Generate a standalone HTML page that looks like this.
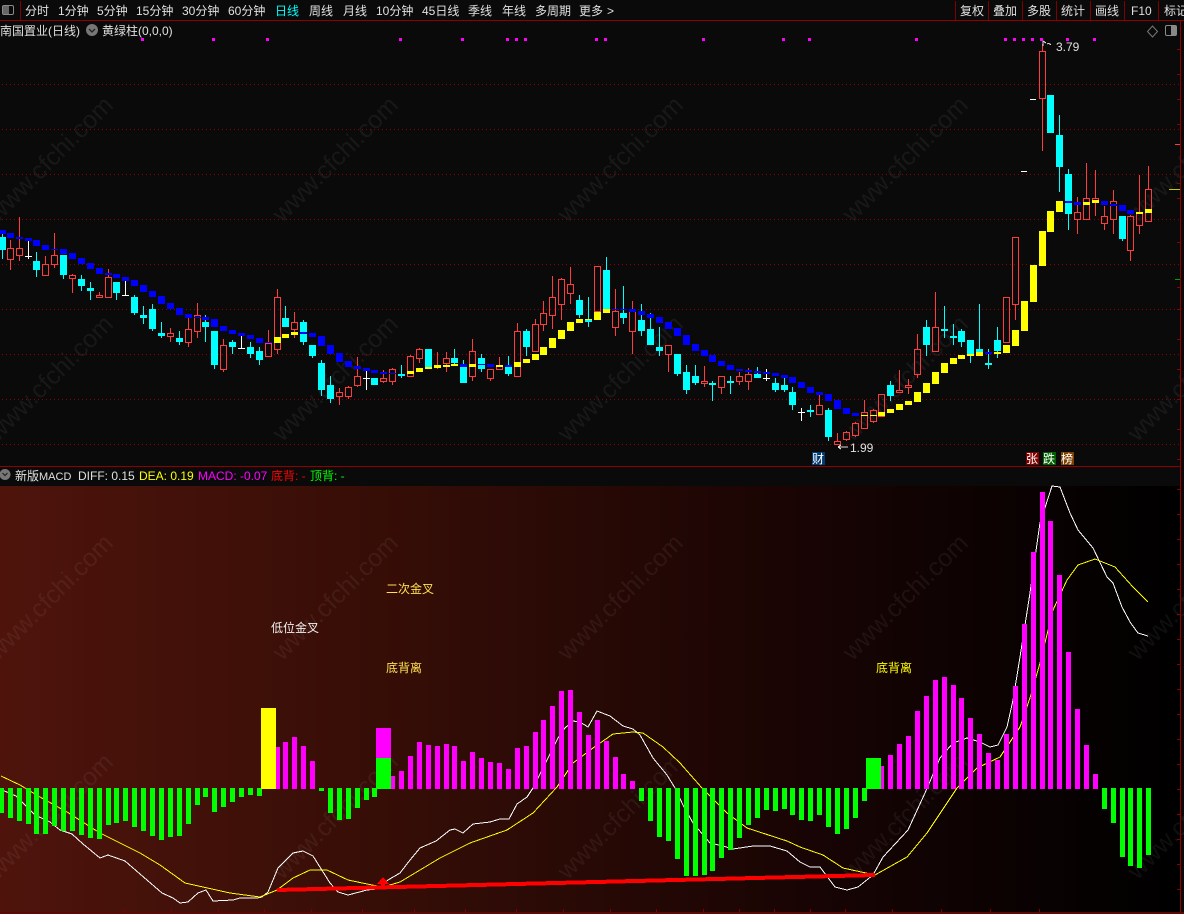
<!DOCTYPE html>
<html>
<head>
<meta charset="utf-8">
<style>
html,body{margin:0;padding:0;background:#0a0a0a;width:1184px;height:914px;overflow:hidden}
svg{display:block;position:absolute;left:0;top:0}
text{font-family:"Liberation Sans","WenQuanYi Zen Hei","Noto Sans CJK SC",sans-serif;font-size:12px}
.t{fill:#e0e0e0}
.w{font-size:25px;fill:#fff;fill-opacity:.06}
</style>
</head>
<body>
<svg width="1184" height="914" viewBox="0 0 1184 914" shape-rendering="crispEdges">
<defs><linearGradient id="g" x1="0" x2="1" y1="0" y2="0"><stop offset="0" stop-color="#4e140c"/><stop offset=".35" stop-color="#340d06"/><stop offset=".7" stop-color="#170404"/><stop offset="1" stop-color="#000"/></linearGradient></defs>
<rect width="1184" height="914" fill="#0a0a0a"/>
<rect x="0" y="486" width="1180" height="426" fill="url(#g)"/>

<!-- watermarks -->
<g class="w" text-anchor="middle">
<text class="w" transform="translate(56 165) rotate(-45)">www.cfchi.com</text>
<text class="w" transform="translate(341 165) rotate(-45)">www.cfchi.com</text>
<text class="w" transform="translate(626 165) rotate(-45)">www.cfchi.com</text>
<text class="w" transform="translate(911 165) rotate(-45)">www.cfchi.com</text>
<text class="w" transform="translate(1196 165) rotate(-45)">www.cfchi.com</text>
<text class="w" transform="translate(56 384) rotate(-45)">www.cfchi.com</text>
<text class="w" transform="translate(341 384) rotate(-45)">www.cfchi.com</text>
<text class="w" transform="translate(626 384) rotate(-45)">www.cfchi.com</text>
<text class="w" transform="translate(911 384) rotate(-45)">www.cfchi.com</text>
<text class="w" transform="translate(1196 384) rotate(-45)">www.cfchi.com</text>
<text class="w" transform="translate(56 603) rotate(-45)">www.cfchi.com</text>
<text class="w" transform="translate(341 603) rotate(-45)">www.cfchi.com</text>
<text class="w" transform="translate(626 603) rotate(-45)">www.cfchi.com</text>
<text class="w" transform="translate(911 603) rotate(-45)">www.cfchi.com</text>
<text class="w" transform="translate(1196 603) rotate(-45)">www.cfchi.com</text>
<text class="w" transform="translate(56 822) rotate(-45)">www.cfchi.com</text>
<text class="w" transform="translate(341 822) rotate(-45)">www.cfchi.com</text>
<text class="w" transform="translate(626 822) rotate(-45)">www.cfchi.com</text>
<text class="w" transform="translate(911 822) rotate(-45)">www.cfchi.com</text>
<text class="w" transform="translate(1196 822) rotate(-45)">www.cfchi.com</text>
</g>

<!-- grid -->
<path d="M2 84.5H1180M2 129.5H1180M2 174.5H1180M2 219.5H1180M2 264.5H1180M2 309.5H1180M2 354.5H1180M2 399.5H1180M2 444.5H1180" stroke="#8f0000" stroke-width="1" stroke-dasharray="1 3" fill="none"/>

<!-- frame lines -->
<rect x="0" y="20" width="1184" height="1" fill="#900000"/>
<rect x="0" y="466" width="1180" height="1" fill="#900000"/>
<rect x="1180" y="21" width="1" height="891" fill="#900000"/>
<rect x="0" y="912" width="1184" height="2" fill="#5a0808"/>
<path d="M20.500 1V20M955.500 1V20M988.500 1V20M1022.500 1V20M1056.500 1V20M1090.500 1V20M1124.500 1V20M1158.500 1V20" stroke="#800000"/>
<path d="M1177 49.5h3M1177 74.5h3M1177 99.5h3M1177 124.5h3M1177 183.5h3M1177 198.5h3M1177 242.5h3M1177 287.5h3M1177 309.5h3M1177 339.5h3M1177 369.5h3M1177 399.5h3M1177 429.5h3M1177 459.5h3M1177 489.5h3M1177 514.5h3M1177 539.5h3M1177 564.5h3M1177 589.5h3M1177 614.5h3M1177 639.5h3M1177 664.5h3M1177 689.5h3M1177 714.5h3M1177 739.5h3M1177 764.5h3M1177 789.5h3M1177 814.5h3M1177 839.5h3M1177 864.5h3M1177 889.5h3" stroke="#900000" fill="none"/>
<path d="M1175 144.5h5" stroke="#ff3c3c"/><path d="M1169 189.5h11" stroke="#c8c800"/><path d="M1175 279.5h5" stroke="#00a000"/>
<path d="M124.5 909v3M171.5 909v3M218.5 909v3M264.5 909v3M311.5 909v3M362.5 909v3M414.5 909v3M465.5 909v3M516.5 909v3M563.5 909v3M610.5 909v3M656.5 909v3M703.5 909v3M739.5 909v3M774.5 909v3M810.5 909v3M845.5 909v3M892.5 909v3M941.5 909v3M990.5 909v3M1039.5 909v3" stroke="#800000"/>

<!-- top-left & right icons -->
<rect x="2.5" y="5.5" width="11" height="9" rx="1.5" fill="none" stroke="#8a8a8a" shape-rendering="auto"/><rect x="3" y="6" width="6" height="8" fill="#666"/>
<path d="M1152.500 26l5 5.500-5 5.500-5-5.500z" fill="none" stroke="#777" shape-rendering="auto"/>
<rect x="1165.5" y="25.5" width="11" height="10" rx="1.5" fill="none" stroke="#8a8a8a" shape-rendering="auto"/><rect x="1171" y="26" width="5" height="9" fill="#888"/>

<!-- magenta dots -->
<path fill="#f0f" d="M141 38h3v3h-3zM212 38h3v3h-3zM266 38h3v3h-3zM399 38h3v3h-3zM461 38h3v3h-3zM506 38h3v3h-3zM515 38h3v3h-3zM524 38h3v3h-3zM595 38h3v3h-3zM604 38h3v3h-3zM702 38h3v3h-3zM782 38h3v3h-3zM808 38h3v3h-3zM915 38h3v3h-3zM1004 38h3v3h-3zM1013 38h3v3h-3zM1022 38h3v3h-3zM1031 38h3v3h-3zM1040 38h3v3h-3zM1066 38h3v3h-3zM1093 38h3v3h-3z"/>

<!-- toolbar text -->
<g class="t">
<text class="t" x="25" y="15">分时</text>
<text class="t" x="58" y="15">1分钟</text>
<text class="t" x="97" y="15">5分钟</text>
<text class="t" x="136" y="15">15分钟</text>
<text class="t" x="182" y="15">30分钟</text>
<text class="t" x="228" y="15">60分钟</text>
<text x="275" y="15" fill="#00ffff">日线</text>
<text class="t" x="309" y="15">周线</text>
<text class="t" x="343" y="15">月线</text>
<text class="t" x="376" y="15">10分钟</text>
<text class="t" x="422" y="15">45日线</text>
<text class="t" x="468" y="15">季线</text>
<text class="t" x="502" y="15">年线</text>
<text class="t" x="535" y="15">多周期</text>
<text class="t" x="579" y="15">更多</text>
<text class="t" x="607" y="15">&gt;</text>
<text class="t" x="960" y="15">复权</text>
<text class="t" x="993" y="15">叠加</text>
<text class="t" x="1027" y="15">多股</text>
<text class="t" x="1061" y="15">统计</text>
<text class="t" x="1095" y="15">画线</text>
<text class="t" x="1131" y="15">F10</text>
<text class="t" x="1164" y="15">标记</text>
<text class="t" x="0" y="35">南国置业(日线)</text>
<text class="t" x="102" y="35">黄绿柱(0,0,0)</text>
</g>
<g shape-rendering="auto"><circle cx="92" cy="30" r="6" fill="#777"/><path d="M89 29l3 3 3-3" fill="none" stroke="#222" stroke-width="1.3"/></g>

<!-- red candles -->
<path fill="none" stroke="#ff3c3c" stroke-width="1" d="
M10.5 240V248M10.5 260V270M7.5 248.5h6v11h-6z
M19.5 217V248M19.5 256V261M16.5 248.5h6v7h-6z
M45.5 256V264M42.5 264.5h6v11h-6z
M54.5 233V255M54.5 265V268M51.5 255.5h6v9h-6z
M72.5 274V275M72.5 279V293M69.5 275.5h6v3h-6z
M99.5 292V295M96.5 295.5h6v2h-6z
M108.5 269V277M105.5 277.5h6v20h-6z
M170.5 328V333M170.5 337V342M167.5 333.5h6v3h-6z
M188.5 318V329M188.5 343V347M185.5 329.5h6v13h-6z
M197.5 303V315M197.5 332V338M194.5 315.5h6v16h-6z
M223.5 339V345M223.5 370V372M220.5 345.5h6v24h-6z
M268.5 330V343M265.5 343.5h6v13h-6z
M277.5 289V297M277.5 350V354M274.5 297.5h6v52h-6z
M294.5 312V322M294.5 330V338M291.5 322.5h6v7h-6z
M339.5 388V392M339.5 397V405M336.5 392.5h6v4h-6z
M348.5 386V387M348.5 397V399M345.5 387.5h6v9h-6z
M357.5 357V376M357.5 386V387M354.5 376.5h6v9h-6z
M383.5 370V378M383.5 382V383M380.5 378.5h6v3h-6z
M392.5 368V369M392.5 382V385M389.5 369.5h6v12h-6z
M410.5 355V356M407.5 356.5h6v20h-6z
M419.5 348V349M419.5 359V363M416.5 349.5h6v9h-6z
M437.5 352V365M437.5 368V369M434.5 365.5h6v2h-6z
M446.5 352V358M446.5 364V372M443.5 358.5h6v5h-6z
M472.5 339V351M472.5 377V381M469.5 351.5h6v25h-6z
M490.5 379V381M487.5 369.5h6v9h-6z
M499.5 357V365M496.5 365.5h6v4h-6z
M517.5 323V331M514.5 331.5h6v45h-6z
M535.5 319V324M532.5 324.5h6v27h-6z
M543.5 301V313M543.5 325V331M540.5 313.5h6v11h-6z
M552.5 276V297M552.5 316V329M549.5 297.5h6v18h-6z
M561.5 278V279M561.5 305V320M558.5 279.5h6v25h-6z
M570.5 267V284M570.5 294V304M567.5 284.5h6v9h-6z
M594.5 266.5h6v45h-6z
M615.5 289V311M615.5 328V336M612.5 311.5h6v16h-6z
M632.5 301V309M632.5 332V354M629.5 309.5h6v22h-6z
M668.5 355V372M665.5 345.5h6v9h-6z
M704.5 366V381M704.5 384V387M701.5 381.5h6v2h-6z
M721.5 388V394M718.5 376.5h6v11h-6z
M739.5 372V376M739.5 382V385M736.5 376.5h6v5h-6z
M748.5 368V374M748.5 382V390M745.5 374.5h6v7h-6z
M819.5 395V405M816.5 405.5h6v9h-6z
M837.5 433V441M834.5 441.5h6v3h-6z
M846.5 431V432M846.5 440V441M843.5 432.5h6v7h-6z
M855.5 422V423M855.5 436V437M852.5 423.5h6v12h-6z
M864.5 400V412M861.5 412.5h6v16h-6z
M873.5 409V410M873.5 422V423M870.5 410.5h6v11h-6z
M878.5 394.5h6v22h-6z
M899.5 370V390M896.5 390.5h6v2h-6z
M908.5 379V385M908.5 388V394M905.5 385.5h6v2h-6z
M917.5 334V349M917.5 375V378M914.5 349.5h6v25h-6z
M935.5 292V327M932.5 327.5h6v24h-6z
M1003.5 297.5h6v45h-6z
M1015.5 305V320M1012.5 237.5h6v67h-6z
M1042.5 44V51M1042.5 99V151M1039.5 51.5h6v47h-6z
M1077.5 197V212M1077.5 220V234M1074.5 212.5h6v7h-6z
M1086.5 163V198M1083.5 198.5h6v21h-6z
M1095.5 170V198M1095.5 203V216M1092.5 198.5h6v4h-6z
M1104.5 206V216M1104.5 224V230M1101.5 216.5h6v7h-6z
M1113.5 190V201M1113.5 220V234M1110.5 201.5h6v18h-6z
M1130.5 215V216M1130.5 251V261M1127.5 216.5h6v34h-6z
M1139.5 175V213M1139.5 226V234M1136.5 213.5h6v12h-6z
M1148.5 166V189M1145.5 189.5h6v32h-6z"/>

<!-- cyan wicks -->
<path fill="none" stroke="#00ffff" stroke-width="1" d="M2.5 234V259M36.5 252V277M63.5 255V279M81.5 275V291M90.5 282V300M116.5 282V300M134.5 295V315M143.5 306V324M152.5 304V331M161.5 322V338M179.5 331V345M205.5 315V342M214.5 331V369M232.5 340V354M250.5 342V358M259.5 347V365M285.5 306V327M303.5 320V345M312.5 345V358M321.5 360V396M330.5 376V403M374.5 378V385M401.5 365V378M428.5 349V368M454.5 349V365M463.5 360V383M481.5 354V372M508.5 356V376M526.5 329V356M579.5 295V318M588.5 297V327M606.5 257V309M623.5 286V324M641.5 304V336M650.5 313V345M659.5 327V356M677.5 354V376M686.5 365V394M695.5 365V385M712.5 381V401M730.5 376V394M757.5 367V378M775.5 378V392M784.5 378V392M792.5 387V410M810.5 405V417M828.5 408V441M890.5 381V401M926.5 320V356M944.5 306V338M953.5 324V345M961.5 329V347M970.5 340V363M979.5 304V354M988.5 349V369M997.5 327V358M1050.5 95V133M1059.5 115V192M1068.5 169V230M1122.5 216V241"/>
<!-- cyan bodies -->
<path fill="#00ffff" d="M-1 237h7v13h-7zM33 261h7v9h-7zM60 255h7v20h-7zM78 279h7v7h-7zM87 288h7v3h-7zM113 282h7v11h-7zM131 297h7v16h-7zM140 315h7v3h-7zM149 309h7v20h-7zM158 333h7v3h-7zM176 338h7v4h-7zM202 322h7v5h-7zM211 331h7v34h-7zM229 342h7v5h-7zM247 347h7v7h-7zM256 351h7v9h-7zM282 318h7v9h-7zM300 322h7v20h-7zM309 345h7v11h-7zM318 363h7v27h-7zM327 385h7v14h-7zM371 378h7v7h-7zM398 374h7v2h-7zM425 349h7v19h-7zM451 358h7v5h-7zM460 365h7v18h-7zM478 358h7v11h-7zM505 367h7v7h-7zM523 331h7v16h-7zM576 300h7v15h-7zM585 319h7v3h-7zM603 270h7v39h-7zM620 313h7v5h-7zM638 320h7v11h-7zM647 329h7v16h-7zM656 347h7v4h-7zM674 354h7v20h-7zM683 372h7v18h-7zM692 376h7v7h-7zM709 383h7v2h-7zM727 381h7v2h-7zM754 374h7v4h-7zM772 383h7v7h-7zM781 385h7v5h-7zM789 392h7v13h-7zM807 410h7v2h-7zM825 410h7v27h-7zM887 385h7v11h-7zM923 327h7v18h-7zM941 329h7v2h-7zM950 336h7v2h-7zM958 331h7v11h-7zM967 340h7v16h-7zM976 349h7v5h-7zM985 363h7v2h-7zM994 340h7v11h-7zM1047 95h7v38h-7zM1056 135h7v32h-7zM1065 174h7v40h-7zM1119 216h7v23h-7z"/>
<!-- white dojis -->
<path fill="none" stroke="#fff" stroke-width="1" d="M28.5 241V259M25 256.5h7M125.5 281V296M122 295.5h7M241.5 336V349M238 348.5h7M366.5 371V390M363 378.5h7M766.5 369V381M763 378.5h7M801.5 408V421M798 412.5h7M1030 99.5h6M1021 171.5h6"/>

<!-- blue band -->
<path fill="#0000ff" d="M-1 230h7v4h-7zM7 233h7v5h-7zM16 237h7v2h-7zM25 238h7v3h-7zM33 240h7v6h-7zM42 245h7v5h-7zM51 249h7v1h-7zM60 249h7v5h-7zM69 253h7v6h-7zM78 258h7v6h-7zM87 263h7v6h-7zM96 268h7v6h-7zM105 273h7v2h-7zM113 274h7v4h-7zM122 277h7v4h-7zM131 280h7v6h-7zM140 285h7v7h-7zM149 291h7v6h-7zM158 296h7v8h-7zM167 303h7v6h-7zM176 308h7v7h-7zM185 314h7v4h-7zM194 317h7v1h-7zM202 317h7v3h-7zM211 319h7v8h-7zM220 326h7v5h-7zM229 330h7v4h-7zM238 333h7v3h-7zM247 335h7v4h-7zM256 338h7v5h-7zM265 342h7v1h-7zM300 332h7v2h-7zM309 333h7v4h-7zM318 336h7v10h-7zM327 345h7v9h-7zM336 353h7v9h-7zM345 361h7v6h-7zM354 366h7v3h-7zM363 368h7v3h-7zM371 370h7v3h-7zM380 372h7v2h-7zM389 373h7v1h-7zM460 364h7v3h-7zM478 364h7v1h-7zM487 364h7v3h-7zM505 365h7v2h-7zM612 309h7v1h-7zM620 309h7v1h-7zM629 309h7v3h-7zM638 311h7v4h-7zM647 314h7v4h-7zM656 317h7v6h-7zM665 322h7v7h-7zM674 328h7v8h-7zM683 335h7v10h-7zM692 344h7v7h-7zM701 350h7v6h-7zM709 355h7v7h-7zM718 361h7v5h-7zM727 365h7v5h-7zM736 369h7v2h-7zM745 370h7v2h-7zM754 371h7v2h-7zM763 372h7v2h-7zM772 373h7v3h-7zM781 375h7v3h-7zM789 377h7v6h-7zM798 382h7v6h-7zM807 387h7v6h-7zM816 392h7v3h-7zM825 394h7v7h-7zM834 400h7v9h-7zM843 408h7v6h-7zM852 413h7v3h-7zM985 352h7v2h-7zM1065 201h7v2h-7zM1074 202h7v3h-7zM1101 201h7v4h-7zM1110 204h7v2h-7zM1119 205h7v6h-7zM1127 210h7v4h-7z"/>
<!-- yellow band -->
<path fill="#ffff00" d="M274 337h7v6h-7zM282 334h7v4h-7zM291 332h7v3h-7zM407 371h7v3h-7zM416 368h7v4h-7zM425 367h7v2h-7zM434 365h7v3h-7zM443 365h7v2h-7zM451 364h7v2h-7zM469 364h7v3h-7zM496 365h7v2h-7zM514 362h7v5h-7zM523 359h7v4h-7zM532 354h7v6h-7zM540 347h7v8h-7zM549 338h7v10h-7zM558 330h7v9h-7zM567 322h7v9h-7zM576 319h7v4h-7zM585 319h7v1h-7zM594 312h7v8h-7zM603 309h7v4h-7zM861 415h7v1h-7zM870 415h7v1h-7zM878 412h7v4h-7zM887 409h7v4h-7zM896 404h7v6h-7zM905 401h7v4h-7zM914 392h7v10h-7zM923 383h7v10h-7zM932 372h7v12h-7zM941 363h7v10h-7zM950 358h7v6h-7zM958 355h7v4h-7zM967 354h7v2h-7zM976 352h7v4h-7zM994 352h7v2h-7zM1003 345h7v8h-7zM1012 330h7v16h-7zM1021 301h7v30h-7zM1030 265h7v37h-7zM1039 231h7v35h-7zM1047 211h7v21h-7zM1056 201h7v11h-7zM1083 202h7v3h-7zM1092 200h7v3h-7zM1136 212h7v2h-7zM1145 209h7v4h-7z"/>

<!-- price labels & badges -->
<path d="M1043 41v5M1043 41l3 2M1047 44c2-1 3 0 4 1" fill="none" stroke="#ddd"/>
<text class="t" x="1056" y="51">3.79</text>
<path d="M848 447h-10M838 447l3-2M838 447l3 2" fill="none" stroke="#ddd"/>
<text class="t" x="850" y="452">1.99</text>
<rect x="812" y="452" width="13" height="13" fill="#003a70"/><text x="812" y="463" fill="#fff">财</text>
<rect x="1026" y="452" width="13" height="13" fill="#800000"/><text x="1026" y="463" fill="#fff">张</text>
<rect x="1043" y="452" width="13" height="13" fill="#006000"/><text x="1043" y="463" fill="#fff">跌</text>
<rect x="1061" y="452" width="13" height="13" fill="#804000"/><text x="1061" y="463" fill="#fff">榜</text>

<!-- MACD title -->
<g shape-rendering="auto"><circle cx="5" cy="474.5" r="5.5" fill="#777"/><path d="M2.500 473l2.500 2.500 2.500-2.500" fill="none" stroke="#222" stroke-width="1.200"/></g>
<text class="t" x="15" y="480">新版<tspan font-size="11">MACD</tspan></text>
<text class="t" x="78" y="480">DIFF: 0.15</text>
<text x="139" y="480" fill="#ffff00">DEA: 0.19</text>
<text x="198" y="480" fill="#ff00ff">MACD: -0.07</text>
<text x="271" y="480" fill="#ff0000">底背: -</text>
<text x="310" y="480" fill="#00ff00">顶背: -</text>

<!-- MACD labels -->
<text x="271" y="632" fill="#f0f0f0">低位金叉</text>
<text x="386" y="593" fill="#ffe050">二次金叉</text>
<text x="386" y="672" fill="#ffe050">底背离</text>
<text x="876" y="672" fill="#ffff00">底背离</text>

<!-- DIFF -->
<path fill="none" stroke="#fff" stroke-width="1" d="M0 789L16 796 25 805 35 815 50 822 60 830 72 834 83 844 100 858 108 855 125 861 140 874 162 893 173 898 180 903 188 902 198 893 206 890 213 901 233 900 240 898 257 898 262 897 268 892 278 868 293 853 303 851 313 856 330 883 338 892 348 895 367 890 377 889 388 880 400 873 410 860 420 848 436 841 450 830 455 829 463 833 473 824 490 822 500 819 509 819 517 804 527 797 533 788 547 760 558 738 565 728 573 721 580 722 588 727 597 711 610 716 623 726 633 729 640 735 653 758 667 775 675 788 683 805 693 823 710 843 723 846 733 849 753 846 770 846 787 851 800 862 810 867 820 867 835 887 847 890 858 887 873 875 883 857 908 830 925 793 940 758 953 743 967 738 980 742 990 747 998 745 1007 727 1013 700 1020 657 1030 593 1040 523 1052 486 1060 487 1070 513 1078 530 1093 548 1107 577 1113 583 1122 607 1130 622 1138 633 1148 636"/>
<!-- DEA -->
<path fill="none" stroke="#ffff00" stroke-width="1" d="M1 776L20 785 40 797 67 812 100 833 140 853 160 865 185 883 203 887 230 893 260 897 277 890 293 878 310 870 327 870 348 880 367 884 383 887 400 882 420 870 440 858 470 843 507 830 533 813 557 787 573 763 593 748 613 734 633 732 643 733 663 747 680 763 702 788 727 813 747 828 787 841 800 847 823 855 843 868 875 875 907 857 927 833 957 788 977 768 1000 757 1020 727 1030 698 1040 663 1053 610 1067 580 1078 565 1095 559 1115 567 1133 587 1148 602"/>

<!-- MACD green -->
<path fill="#00ff00" d="M0 788h4v25H0zM8 788h5v30H8zM17 788h5v33h-5zM26 788h5v36h-5zM34 788h5v46h-5zM43 788h5v46h-5zM52 788h5v38h-5zM61 788h5v43h-5zM70 788h5v43h-5zM79 788h5v47h-5zM88 788h5v50h-5zM97 788h5v51h-5zM106 788h5v37h-5zM114 788h5v35h-5zM123 788h5v33h-5zM132 788h5v39h-5zM141 788h5v43h-5zM150 788h5v48h-5zM159 788h5v52h-5zM168 788h5v49h-5zM177 788h5v48h-5zM186 788h5v36h-5zM195 788h5v17h-5zM203 788h5v9h-5zM212 788h5v24h-5zM221 788h5v19h-5zM230 788h5v14h-5zM239 788h5v9h-5zM248 788h5v7h-5zM257 788h5v8h-5zM319 788h5v3h-5zM328 788h5v25h-5zM337 788h5v32h-5zM346 788h5v31h-5zM355 788h5v20h-5zM364 788h5v12h-5zM372 788h5v9h-5zM376 758h15v31h-15zM639 788h5v13h-5zM648 788h5v33h-5zM657 788h5v49h-5zM666 788h5v53h-5zM675 788h5v71h-5zM684 788h5v88h-5zM693 788h5v88h-5zM702 788h5v87h-5zM710 788h5v83h-5zM719 788h5v70h-5zM728 788h5v62h-5zM737 788h5v50h-5zM746 788h5v37h-5zM755 788h5v30h-5zM764 788h5v22h-5zM773 788h5v23h-5zM782 788h5v21h-5zM790 788h5v27h-5zM799 788h5v32h-5zM808 788h5v33h-5zM817 788h5v27h-5zM826 788h5v39h-5zM835 788h5v46h-5zM844 788h5v41h-5zM853 788h5v30h-5zM862 788h5v13h-5zM866 758h15v31h-15zM1102 788h5v21h-5zM1111 788h5v35h-5zM1120 788h5v69h-5zM1128 788h5v78h-5zM1137 788h5v80h-5zM1146 788h5v67h-5z"/>
<!-- MACD magenta -->
<path fill="#ff00ff" d="M276 747h4v42h-4zM283 742h5v47h-5zM292 737h5v52h-5zM301 746h5v43h-5zM310 761h5v28h-5zM376 728h15v30h-15zM391 776h4v13h-4zM399 771h5v18h-5zM408 756h5v33h-5zM417 742h5v47h-5zM426 745h5v44h-5zM435 746h5v43h-5zM444 744h5v45h-5zM452 746h5v43h-5zM461 761h5v28h-5zM470 752h5v37h-5zM479 758h5v31h-5zM488 762h5v27h-5zM497 763h5v26h-5zM506 769h5v20h-5zM515 748h5v41h-5zM524 746h5v43h-5zM533 732h5v57h-5zM541 720h5v69h-5zM550 706h5v83h-5zM559 691h5v98h-5zM568 690h5v99h-5zM577 712h5v77h-5zM586 735h5v54h-5zM595 720h5v69h-5zM604 741h5v48h-5zM613 757h5v32h-5zM621 774h5v15h-5zM630 781h5v8h-5zM881 766h3v23h-3zM888 755h5v34h-5zM897 744h5v45h-5zM906 736h5v53h-5zM915 711h5v78h-5zM924 696h5v93h-5zM933 680h5v109h-5zM942 677h5v112h-5zM951 685h5v104h-5zM959 698h5v91h-5zM968 718h5v71h-5zM977 734h5v55h-5zM986 753h5v36h-5zM995 760h5v29h-5zM1004 734h5v55h-5zM1013 686h5v103h-5zM1022 624h5v165h-5zM1031 552h5v237h-5zM1040 492h5v297h-5zM1048 521h5v268h-5zM1057 575h5v214h-5zM1066 652h5v137h-5zM1075 709h5v80h-5zM1084 745h5v44h-5zM1093 774h5v15h-5z"/>
<!-- big yellow -->
<rect x="261" y="708" width="15" height="81" fill="#ffff00"/>

<!-- red divergence line -->
<path d="M277 890L875 875" stroke="#ff0000" stroke-width="4" fill="none"/>
<path d="M383 877l6 7h-4v3h-4v-3h-4z" fill="#ff0000"/>
</svg>
</body>
</html>
